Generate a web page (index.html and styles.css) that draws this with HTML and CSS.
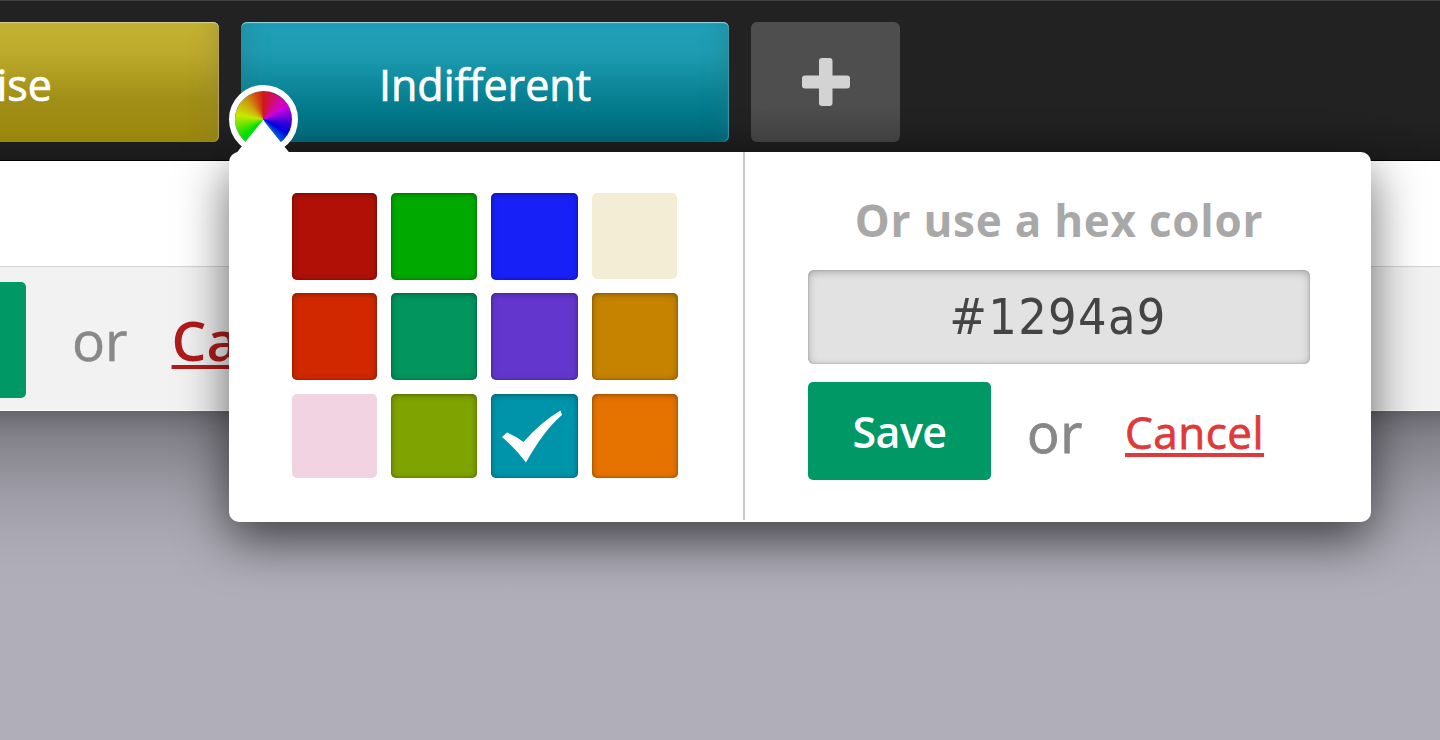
FILE: index.html
```html
<!DOCTYPE html>
<html lang="en">
<head>
<meta charset="utf-8">
<title>Tab color</title>
<link rel="stylesheet" href="styles.css">
</head>
<body>
<div class="app">
  <nav class="tabs">
    <div class="tab tab-gold"><span>ise</span></div>
    <div class="tab tab-teal"><span>Indifferent</span></div>
    <button class="add" aria-label="Add tab">
      <svg width="48" height="50" viewBox="0 0 48 50"><path d="M20 1h7.500q3 0 3 3V18.500H45q3 0 3 3v7q0 3-3 3H30.500V46q0 3-3 3H20q-3 0-3-3V31.500H3q-3 0-3-3v-7q0-3 3-3H17V4Q17 1 20 1z" fill="#d3d3d3"/></svg>
    </button>
  </nav>
  <div class="sheet">
    <div class="sheet-body"></div>
    <div class="sheet-foot">
      <div class="foot-button"></div>
      <span class="foot-or">or</span>
      <a class="foot-cancel">Cancel</a>
    </div>
  </div>
  <div class="sheet-shadow"></div>
</div>
<div class="popover">
  <div class="wheel"></div>
  <div class="pointer"></div>
  <div class="swatches">
    <i class="swatch red"></i><i class="swatch green"></i><i class="swatch blue"></i><i class="swatch cream flat"></i>
    <i class="swatch vermilion"></i><i class="swatch jade"></i><i class="swatch purple"></i><i class="swatch ochre"></i>
    <i class="swatch pink flat"></i><i class="swatch olive"></i>
    <i class="swatch teal"><svg width="86" height="84" viewBox="0 0 86 84"><path d="M11 43l5-4.500Q25 42 32.500 48Q50 28 69.500 16.500L71 21Q53 36 35 68.500Q23 53 11 43z" fill="#fff"/></svg></i>
    <i class="swatch orange"></i>
  </div>
  <div class="hex">
    <div class="hex-title"><span>Or use a hex color</span></div>
    <div class="hex-input"><span>#1294a9</span></div>
    <div class="actions">
      <button class="save">Save</button>
      <span class="or">or</span>
      <a class="cancel">Cancel</a>
    </div>
  </div>
</div>
</body>
</html>
```
FILE: styles.css
```css
* { box-sizing: border-box; }
body {
  margin: 0;
  width: 1440px;
  height: 740px;
  overflow: hidden;
  position: relative;
  background: #b0aeb9;
  font-family: "Open Sans", "Noto Sans", sans-serif;
}
button { border: 0; padding: 0; font-family: inherit; }
.tabs {
  height: 161px;
  padding-top: 21px;
  display: flex;
  gap: 22px;
  background: linear-gradient(#222 75%, #1b1b1b);
  border-top: 1px solid #414342;
  border-bottom: 1px solid #000;
}
.tab {
  height: 120px;
  border-radius: 6px;
  color: #fff;
  font-size: 43px;
  line-height: 126px;
  text-align: center;
  white-space: nowrap;
  -webkit-text-stroke: .7px #fff;
}
.tab-gold {
  width: 219px;
  padding-right: 167px;
  border-radius: 0 6px 6px 0;
  display: flex;
  justify-content: flex-end;
  background: linear-gradient(#c5b232, #bdab2c 25%, #a18e17 65%, #9b870d);
  box-shadow: inset 0 2px 1px -1px #ddd296, inset -1px 0 1px #b4a64b, inset -24px 0 24px -22px #85804488;
}
.tab-teal {
  width: 488px;
  background: linear-gradient(#20a0b8, #1e9bb1 27%, #067f90 65%, #007586 82%, #006a7c);
  box-shadow: inset 0 2px 1px -1px #9cd7e1, inset -1px 0 1px #3b9aaa, inset 24px 0 24px -22px #28748088, inset -24px 0 24px -22px #28748088;
}
.add {
  width: 149px;
  height: 120px;
  border-radius: 6px;
  display: flex;
  align-items: center;
  justify-content: center;
  background: linear-gradient(#4e4e4e 70%, #444);
}
.sheet-body { height: 106px; background: #fff; border-bottom: 1px solid #d3d3d3; }
.sheet-foot {
  height: 144px;
  display: flex;
  background: #f2f2f2;
  border-bottom: 1px solid #fff;
}
.sheet-shadow {
  height: 180px;
  background: linear-gradient(#0000006c, #00000054 12px, #00000040 28px, #0000002a 60px, #0000001a 85px, #00000010 108px, #00000006 138px, #0000);
}
.foot-button {
  width: 26px;
  height: 116px;
  margin-top: 14.500px;
  border-radius: 0 5px 5px 0;
  background: #009966;
}
.foot-or { margin-left: 46px; font-size: 55px; line-height: 145px; color: #888; -webkit-text-stroke: .5px #888; }
.foot-cancel {
  margin-left: 44px;
  font-size: 55px;
  font-weight: 600;
  line-height: 145px;
  color: #b01b1b;
  text-decoration: underline 4px;
  text-underline-offset: 4px;
}
.popover {
  position: absolute;
  left: 229px;
  top: 152px;
  width: 1142px;
  height: 369.500px;
  display: flex;
  background: #fff;
  border-radius: 10px;
  box-shadow: 0 18px 50px #00000098;
}
.wheel {
  position: absolute;
  left: 0;
  top: -67px;
  width: 69px;
  height: 69px;
  border: 6px solid #fcfcfc;
  border-radius: 50%;
  background: conic-gradient(#d01818, #d000e0 60deg, #3000d8 100deg, #0000e0 120deg, #0080d0 150deg, #fff 180deg, #00d830 205deg, #00e000 230deg, #c8e800 280deg, #cfa20d 315deg, #d01818) padding-box;
}
.pointer {
  position: absolute;
  left: 5px;
  top: -32px;
  width: 58px;
  height: 36px;
  background: #fff;
  clip-path: polygon(50% 0, 100% 100%, 0 100%);
}
.swatches {
  width: 516px;
  height: 368px;
  padding: 41px 0 0 63px;
  border-right: 2px solid #c9c9c9;
  display: grid;
  grid-template-columns: 85px 86.500px 86.500px 86.500px;
  grid-template-rows: 86.500px 86.500px 84.500px;
  gap: 13.900px;
  align-content: start;
}
.swatch { border-radius: 5px; box-shadow: inset 0 1px 6px #0005, inset 0 0 2px #0004; }
.swatch svg { display: block; }
.flat { box-shadow: none; }
.red { background: #b11006; }
.green { background: #00a900; }
.blue { background: #1820f8; }
.cream { background: #f2edd4; width: 85.500px; height: 86px; }
.vermilion { background: #d12800; }
.jade { background: #02955e; }
.purple { background: #6337ce; }
.ochre { background: #c58300; }
.pink { background: #f2d3e1; }
.olive { background: #7fa300; }
.teal { background: #0094ab; }
.orange { background: #e67300; }
.hex { flex: 1; padding: 36px 61px 0 63px; }
.hex-title {
  height: 82px;
  line-height: 65px;
  text-align: center;
  white-space: nowrap;
  color: #a8a8a8;
  font-size: 44px;
  font-weight: 700;
  letter-spacing: .75px;
}
.hex-input {
  height: 94px;
  border-radius: 6px;
  background: #e2e2e2;
  box-shadow: inset 0 2px 8px #0004, inset 0 0 2px #0004;
  text-align: center;
  line-height: 95px;
  color: #444;
  font-family: "DejaVu Sans Condensed", "DejaVu Sans", sans-serif;
  font-stretch: condensed;
  font-size: 50px;
  letter-spacing: 1.300px;
  padding-right: 2px;
}
.actions { display: flex; margin-top: 18px; height: 98px; line-height: 100px; }
.save {
  width: 183px;
  height: 98px;
  border-radius: 5px;
  background: #009966;
  color: #fff;
  font-size: 43px;
  font-weight: 600;
  letter-spacing: -.6px;
}
.or { margin-left: 36px; width: 98px; font-size: 54px; color: #888; line-height: 101px; letter-spacing: .8px; -webkit-text-stroke: .9px #888; }
.cancel {
  font-size: 44px;
  line-height: 101px;
  color: #dd3b3b;
  letter-spacing: .5px;
  -webkit-text-stroke: .8px #dd3b3b;
  text-decoration: underline 3.500px;
  text-underline-offset: 4px;
  text-decoration-skip-ink: none;
}
```
